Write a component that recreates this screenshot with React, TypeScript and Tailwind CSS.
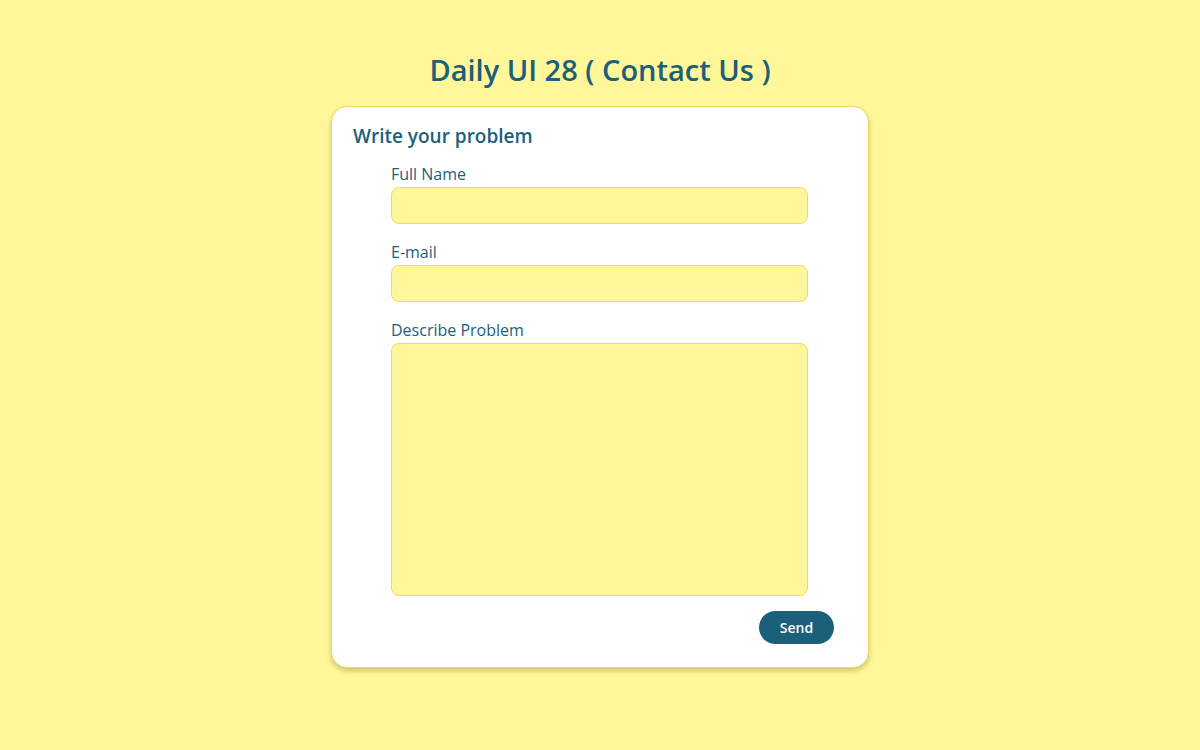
import React from 'react';

const Field: React.FC<{ label: string; multiline?: boolean }> = ({ label, multiline }) => (
    <div className="flex flex-col">
        <label className="text-[16px] leading-[20px] text-[#1b5f7b] mb-[3px]">{label}</label>
        {multiline ? (
            <textarea className="w-[417px] h-[253px] bg-[#fff799] border border-[#f3d95a] rounded-[8px] resize-none outline-none" />
        ) : (
            <input className="w-[417px] h-[37px] bg-[#fff799] border border-[#f3d95a] rounded-[8px] outline-none" />
        )}
    </div>
);

const App: React.FC = () => {
    return (
        <div
            className="w-full min-h-[750px] bg-[#fff799] flex flex-col items-center"
            style={{ fontFamily: '"Open Sans", "Noto Sans", sans-serif' }}
        >
            <h1 className="mt-[50px] text-[29px] leading-[40px] font-semibold text-[#1b5f7b]">Daily UI 28 ( Contact Us )</h1>
            <div className="mt-[16px] w-[538px] h-[562px] bg-white border border-[#f3d95a] rounded-[16px] shadow-[0_3px_5px_rgba(120,110,40,0.35)] flex flex-col">
                <h2 className="mt-[16px] ml-[21px] text-[19px] leading-[26px] font-semibold text-[#1b5f7b]">Write your problem</h2>
                <div className="ml-[59px] mt-[15px] flex flex-col gap-[18px]">
                    <Field label="Full Name" />
                    <Field label="E-mail" />
                    <Field label="Describe Problem" multiline />
                </div>
                <div className="flex justify-end mr-[34px] mt-[15px]">
                    <button className="w-[75px] h-[33px] rounded-full bg-[#1b5f7b] text-white text-[14px] font-semibold">Send</button>
                </div>
            </div>
        </div>
    );
};

export default App;
